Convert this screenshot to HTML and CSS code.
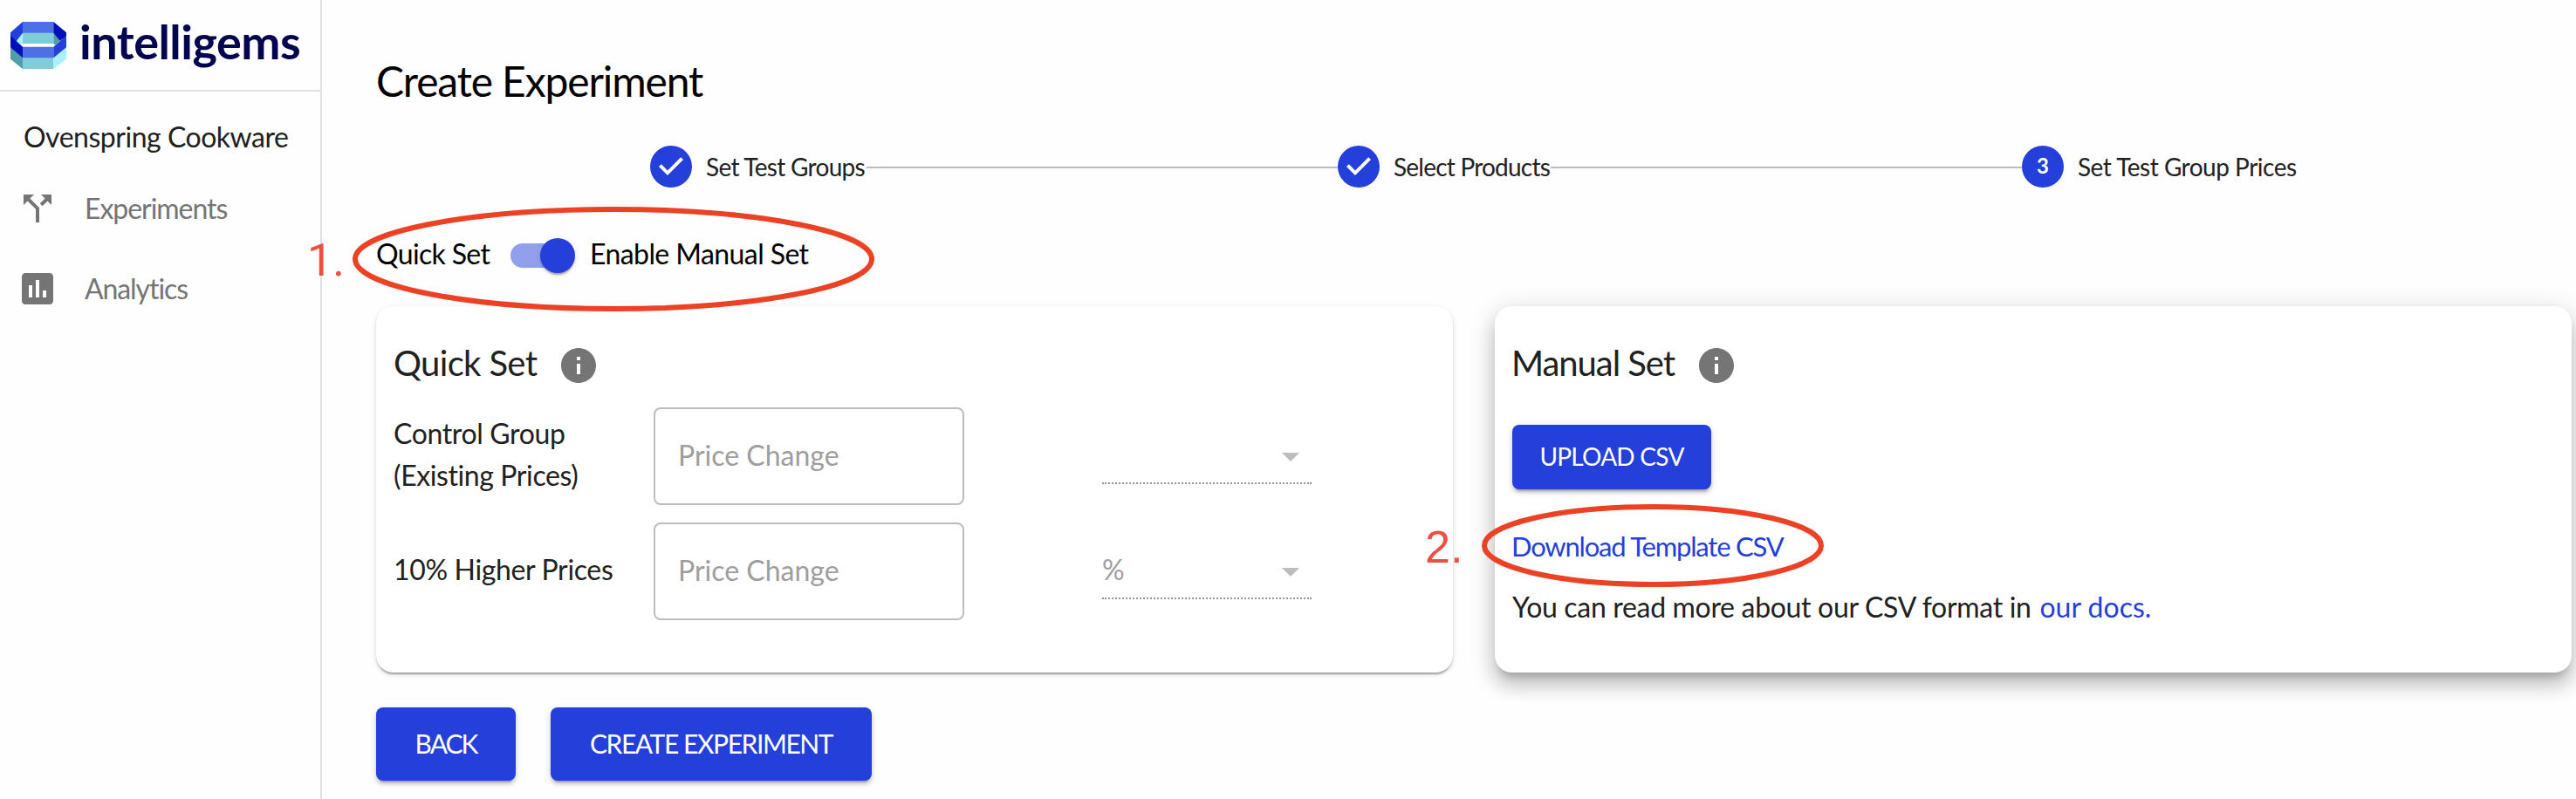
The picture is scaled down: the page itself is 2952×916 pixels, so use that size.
FILE: index.html
```
<!DOCTYPE html>
<html lang="en">
<head>
<meta charset="utf-8">
<title>Create Experiment</title>
<link rel="stylesheet" href="styles.css">
</head>
<body>
<div class="app">
  <aside class="sidebar">
    <div class="brand">
      <svg class="brand-mark" viewBox="36 74 192 162" aria-hidden="true">
        <path fill="#4fa0aa" d="M36 158 78 196V236L36 202Z"/>
        <path fill="#80cdd8" d="M78 196H184V236H78Z"/>
        <path fill="#aaf2fb" d="M184 196 228 158V202L184 236Z"/>
        <path fill="#aaf2fb" d="M78 111V150L66 152 54 140Z"/>
        <path fill="#80cdd8" d="M78 111H184V149H78Z"/>
        <path fill="#4fa0aa" d="M184 111 208 138 190 154 184 149Z"/>
        <path fill="#2540da" d="M36 111 78 74V112L56 141 36 124Z"/>
        <path fill="#4d6fe8" d="M78 74H184V112H78Z"/>
        <path fill="#0010b8" d="M184 74 228 111V124L206 139 184 112Z"/>
        <path fill="#0010b8" d="M36 121 78 160V198L36 162Z"/>
        <path fill="#4d6fe8" d="M78 160H184V198H78Z"/>
        <path fill="#2540da" d="M228 121V162L184 198V160Z"/>
      </svg>
      <span class="brand-name">intelligems</span>
    </div>
    <div class="store">Ovenspring Cookware</div>
    <nav class="nav">
      <a class="nav-item">
        <svg class="icon" viewBox="0 0 24 24"><path d="M14 4l2.29 2.29-2.88 2.88 1.42 1.42 2.88-2.88L20 10V4zm-4 0H4v6l2.29-2.29 4.71 4.7V20h2v-8.41l-5.29-5.3z"/></svg>
        <span class="nav-experiments">Experiments</span>
      </a>
      <a class="nav-item">
        <svg class="icon" viewBox="0 0 24 24"><path d="M19 3H5c-1.1 0-2 .9-2 2v14c0 1.1.9 2 2 2h14c1.1 0 2-.9 2-2V5c0-1.1-.9-2-2-2zM9 17H7v-7h2v7zm4 0h-2V7h2v10zm4 0h-2v-4h2v4z"/></svg>
        <span class="nav-analytics">Analytics</span>
      </a>
    </nav>
  </aside>

  <main class="main">
    <h1 class="title">Create Experiment</h1>

    <div class="stepper">
      <svg class="step-icon" viewBox="0 0 24 24"><path d="M12 0a12 12 0 1 0 0 24 12 12 0 0 0 0-24zm-2 17l-5-5 1.4-1.4 3.6 3.6 7.6-7.6L19 8l-9 9z"/></svg>
      <span class="step-label step-groups">Set Test Groups</span>
      <span class="step-line"></span>
      <svg class="step-icon" viewBox="0 0 24 24"><path d="M12 0a12 12 0 1 0 0 24 12 12 0 0 0 0-24zm-2 17l-5-5 1.4-1.4 3.6 3.6 7.6-7.6L19 8l-9 9z"/></svg>
      <span class="step-label step-products">Select Products</span>
      <span class="step-line"></span>
      <span class="step-number">3</span>
      <span class="step-label step-prices">Set Test Group Prices</span>
    </div>

    <div class="mode">
      <span class="mode-quick">Quick Set</span>
      <span class="switch"><span class="switch-thumb"></span></span>
      <span class="mode-manual">Enable Manual Set</span>
    </div>

    <div class="cards">
      <section class="card">
        <div class="card-head">
          <h2 class="card-title">Quick Set</h2>
          <svg class="icon" viewBox="0 0 24 24"><path d="M12 2C6.48 2 2 6.48 2 12s4.48 10 10 10 10-4.480 10-10S17.520 2 12 2zm1 15h-2v-6h2v6zm0-8h-2V7h2v2z"/></svg>
        </div>
        <div class="rows">
          <div class="row">
            <div class="row-label"><span class="label-control">Control Group</span><span class="label-existing">(Existing Prices)</span></div>
            <div class="field">Price Change</div>
            <div class="select"><span></span><span class="caret"></span></div>
          </div>
          <div class="row">
            <div class="row-label"><span class="label-higher">10% Higher Prices</span></div>
            <div class="field">Price Change</div>
            <div class="select"><span class="select-value">%</span><span class="caret"></span></div>
          </div>
        </div>
      </section>

      <section class="card card-raised">
        <div class="card-head">
          <h2 class="card-title card-title-manual">Manual Set</h2>
          <svg class="icon" viewBox="0 0 24 24"><path d="M12 2C6.48 2 2 6.48 2 12s4.48 10 10 10 10-4.480 10-10S17.520 2 12 2zm1 15h-2v-6h2v6zm0-8h-2V7h2v2z"/></svg>
        </div>
        <button class="button button-upload">UPLOAD CSV</button>
        <a class="download">Download Template CSV</a>
        <p class="docs">You can read more about our CSV format in <a class="docs-link">our docs.</a></p>
      </section>
    </div>

    <div class="actions">
      <button class="button button-back">BACK</button>
      <button class="button button-create">CREATE EXPERIMENT</button>
    </div>
  </main>

  <svg class="rings" viewBox="0 0 2952 916">
    <ellipse cx="703" cy="297" rx="296" ry="57"/>
    <ellipse cx="1894" cy="625.500" rx="193" ry="44.500"/>
  </svg>
  <span class="mark mark-one">1.</span>
  <span class="mark mark-two">2.</span>
</div>
</body>
</html>
```
FILE: styles.css
```
* { box-sizing: border-box; }

body {
  margin: 0;
  background: #fefefe;
  color: #212121;
  font: 400 32px/48px Lato, sans-serif;
}

.app {
  position: relative;
  display: flex;
  width: 2952px;
  height: 916px;
  overflow: hidden;
}

.icon {
  flex: none;
  width: 48px;
  height: 48px;
  fill: #757575;
}

/* Sidebar */
.sidebar {
  flex: none;
  width: 369px;
  border-right: 2px solid #e0e0e0;
}

.brand {
  display: flex;
  align-items: flex-start;
  gap: 15px;
  height: 105px;
  padding: 24.5px 0 0 12px;
  border-bottom: 2px solid #e0e0e0;
}

.brand-mark { width: 64px; height: 54px; }

.brand-name {
  color: #04044f;
  font-size: 54px;
  font-weight: 700;
  line-height: 46px;
  letter-spacing: -0.51px;
}

.store {
  padding: 28px 0 0 27px;
  letter-spacing: -0.48px;
}

.nav {
  display: flex;
  flex-direction: column;
  gap: 44px;
  padding: 34px 0 0 19px;
  color: #757575;
}

.nav-item { display: flex; gap: 30px; }
.nav-item span { line-height: 47px; }
.nav-experiments { letter-spacing: -1.04px; }
.nav-analytics { letter-spacing: -1.08px; }

/* Main column */
.main {
  flex: 1;
  padding: 57px 5px 0 62px;
}

.title {
  margin: 0;
  color: #000;
  font-size: 48px;
  font-weight: 400;
  line-height: 72px;
  letter-spacing: -1.13px;
}

.stepper {
  display: flex;
  align-items: center;
  height: 48px;
  margin-top: 38px;
  padding-left: 314px;
}

.step-icon {
  flex: none;
  width: 48px;
  height: 48px;
  fill: #253fda;
}

.step-number {
  flex: none;
  width: 48px;
  height: 48px;
  border-radius: 50%;
  background: #253fda;
  color: #fff;
  font-size: 24px;
  font-weight: 700;
  line-height: 46px;
  text-align: center;
}

.step-label {
  flex: none;
  margin-left: 16px;
  font-size: 28px;
  line-height: 46px;
  white-space: nowrap;
}

.step-groups { width: 184px; letter-spacing: -0.7px; }
.step-products { width: 180px; letter-spacing: -0.78px; }
.step-prices { letter-spacing: -0.5px; }

.step-line {
  flex: none;
  width: 540px;
  height: 2px;
  margin-top: 2px;
  background: #bdbdbd;
}

.mode {
  display: flex;
  align-items: center;
  height: 48px;
  margin-top: 54px;
  color: #000;
}

.mode-quick, .mode-manual { padding-bottom: 4px; white-space: nowrap; }
.mode-quick { width: 154px; letter-spacing: -0.65px; }
.mode-manual { letter-spacing: -0.58px; }

.switch {
  display: flex;
  justify-content: flex-end;
  align-items: center;
  width: 68px;
  height: 28px;
  margin-right: 23px;
  border-radius: 14px;
  background: #929fec;
}

.switch-thumb {
  flex: none;
  width: 40px;
  height: 40px;
  margin-right: -6px;
  border-radius: 50%;
  background: #253fda;
  box-shadow: 0 4px 2px -2px rgba(0, 0, 0, .2), 0 2px 2px rgba(0, 0, 0, .14), 0 2px 6px rgba(0, 0, 0, .12);
}

/* Cards */
.cards {
  display: grid;
  grid-template-columns: 1fr 1fr;
  gap: 48px;
  margin-top: 34px;
}

.card {
  height: 420px;
  padding: 40px 20px 0;
  border-radius: 20px;
  background: #fff;
  box-shadow: 0 4px 2px -2px rgba(0, 0, 0, .2), 0 2px 2px rgba(0, 0, 0, .14), 0 2px 6px rgba(0, 0, 0, .12);
}

.card-raised {
  box-shadow: 0 10px 10px -6px rgba(0, 0, 0, .2), 0 16px 20px 2px rgba(0, 0, 0, .14), 0 6px 28px 4px rgba(0, 0, 0, .12);
}

.card-head {
  display: flex;
  align-items: center;
  height: 56px;
}

.card-title {
  width: 188px;
  margin: 0;
  padding-bottom: 6px;
  font-size: 40px;
  font-weight: 400;
  line-height: 48px;
  letter-spacing: -0.65px;
  white-space: nowrap;
}

.card-title-manual {
  width: 211px;
  margin-left: -1px;
  letter-spacing: -1.05px;
}

.rows {
  display: flex;
  flex-direction: column;
  gap: 20px;
  margin-top: 20px;
}

.row {
  display: flex;
  align-items: center;
  height: 112px;
}

.row-label {
  display: flex;
  flex-direction: column;
  width: 298px;
  padding-bottom: 4px;
}

.label-control { letter-spacing: -0.36px; }
.label-existing { letter-spacing: -0.4px; }
.label-higher { letter-spacing: -0.35px; }

.field {
  width: 356px;
  height: 112px;
  padding: 29px 26px 0;
  border: 2px solid #bdbdbd;
  border-radius: 8px;
  color: #9e9e9e;
}

.select {
  display: flex;
  align-items: center;
  justify-content: space-between;
  width: 240px;
  height: 64px;
  margin-left: 158px;
  padding-right: 14px;
  border-bottom: 2px dotted #949494;
  color: #9e9e9e;
}

.select-value {
  padding-bottom: 2px;
  font-size: 32px;
  letter-spacing: -1px;
}

.caret {
  margin-top: 4px;
  border: 10px solid transparent;
  border-top-color: #bdbdbd;
  border-bottom: 0;
}

.button {
  display: block;
  padding: 0 0 3px;
  border: 0;
  border-radius: 8px;
  background: #253fda;
  color: #fff;
  font-family: Lato, sans-serif;
  font-size: 30px;
  font-weight: 400;
  white-space: nowrap;
  box-shadow: 0 6px 2px -4px rgba(0, 0, 0, .2), 0 4px 4px rgba(0, 0, 0, .14), 0 2px 10px rgba(0, 0, 0, .12);
}

.button-upload {
  width: 228px;
  height: 74px;
  margin-top: 40px;
  font-size: 28px;
  letter-spacing: -0.74px;
}

.download, .docs-link { color: #253fda; }

.download {
  display: block;
  margin: 41px 0 0 -1px;
  font-size: 31px;
  letter-spacing: -1.2px;
}

.docs {
  margin: 22px 0 0;
  letter-spacing: -0.32px;
}

.docs-link { margin-left: 2px; letter-spacing: 0; }

.actions {
  display: flex;
  gap: 40px;
  margin-top: 40px;
}

.button-back, .button-create { height: 84px; }
.button-back { width: 160px; letter-spacing: -1.96px; }
.button-create { width: 368px; letter-spacing: -1.41px; }

.docs + * { margin: 0; }

/* Annotations over the page */
.rings {
  position: absolute;
  top: 0;
  left: 0;
  width: 2952px;
  height: 916px;
  fill: none;
  stroke: #eb4124;
  stroke-width: 6;
}

.mark {
  position: absolute;
  color: #ec5040;
  font-size: 52px;
  line-height: 60px;
}

.mark-one { top: 269px; left: 352px; font-family: Roboto, sans-serif; }
.mark-two { top: 597px; left: 1633px; font-family: "Liberation Sans", sans-serif; }
```
